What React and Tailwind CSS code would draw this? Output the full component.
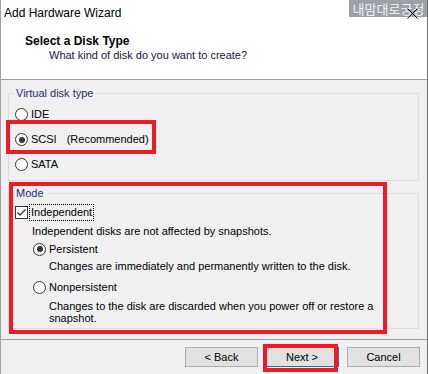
import React from "react";

// Add Hardware Wizard – "Select a Disk Type" page (with red annotation boxes)

function Radio({ checked }) {
  return (
    <span className="flex h-[13px] w-[13px] shrink-0 items-center justify-center rounded-full border border-[#333333] bg-white">
      {checked ? <span className="h-[6px] w-[6px] rounded-full bg-[#333333]" /> : null}
    </span>
  );
}

function Checkbox({ checked }) {
  return (
    <span className="flex h-[13px] w-[13px] shrink-0 items-center justify-center border border-[#333333] bg-white">
      {checked ? (
        <svg width="11" height="11" viewBox="0 0 11 11">
          <path d="M1.5 5.5 L4 8 L9.5 2.5" fill="none" stroke="#333333" strokeWidth="1.3" />
        </svg>
      ) : null}
    </span>
  );
}

const DISK_TYPES = [
  { id: "ide", label: "IDE" },
  { id: "scsi", label: "SCSI", note: "(Recommended)" },
  { id: "sata", label: "SATA" },
];

export default function App() {
  const diskType = "scsi";

  return (
    <div className="relative h-[374px] w-[428px] overflow-hidden border-l border-r border-l-[#a0a0a0] border-r-[#6d6d6d] bg-[#f0f0f0] font-['Liberation_Sans',Arial,sans-serif] text-[11px] text-black">
      {/* Header */}
      <div className="h-[80px] border-b border-[#a0a0a0] bg-white">
        <div className="flex h-[26px] items-center pl-[3px] text-[12px]">Add Hardware Wizard</div>
        <div className="mt-[8px] pl-[24px] text-[12px] font-bold leading-[14px]">Select a Disk Type</div>
        <div className="pl-[48px] text-[11px] leading-[14px] text-[#101838]">
          What kind of disk do you want to create?
        </div>
      </div>

      {/* Body */}
      <div className="pl-[7px] pr-[8px]">
        <fieldset className="mt-[6px] border border-[#dcdcdc] pb-[3px] pl-[6px] pt-[2px]">
          <legend className="ml-[-1px] px-[2px] leading-[14px] text-[#1f2d6b]">Virtual disk type</legend>
          {DISK_TYPES.map((d) => (
            <div key={d.id} className="flex h-[25px] items-center">
              <Radio checked={d.id === diskType} />
              <span className="ml-[3px]">{d.label}</span>
              {d.note ? <span className="ml-[10px]">{d.note}</span> : null}
            </div>
          ))}
        </fieldset>

        <fieldset className="mt-[5px] border border-[#dcdcdc] pb-[4px] pl-[6px]">
          <legend className="ml-[-1px] px-[2px] leading-[14px] text-[#1f2d6b]">Mode</legend>
          <div className="mt-[3px] flex h-[18px] items-center">
            <Checkbox checked />
            <span className="ml-[2px] px-[1px] leading-[15px] outline outline-1 outline-dotted outline-black">
              Independent
            </span>
          </div>
          <div className="mt-[2px] h-[16px] pl-[17px] leading-[16px]">
            Independent disks are not affected by snapshots.
          </div>
          <div className="mt-[1px] flex h-[18px] items-center pl-[18px]">
            <Radio checked />
            <span className="ml-[3px]">Persistent</span>
          </div>
          <div className="h-[16px] pl-[34px] leading-[16px]">
            Changes are immediately and permanently written to the disk.
          </div>
          <div className="mt-[4px] flex h-[18px] items-center pl-[18px]">
            <Radio />
            <span className="ml-[3px]">Nonpersistent</span>
          </div>
          <div className="mt-[4px] pl-[34px] leading-[12px]">
            Changes to the disk are discarded when you power off or restore a
            <br />
            snapshot.
          </div>
        </fieldset>
      </div>

      {/* Footer */}
      <div className="mt-[10px] border-t border-[#a0a0a0] pt-[7px]">
        <div className="flex justify-end pr-[7px]">
          <button className="mr-[7px] h-[20px] w-[73px] border border-[#adadad] bg-[#e1e1e1] text-[11px]">
            &lt; Back
          </button>
          <button className="mr-[8px] h-[20px] w-[74px] border border-[#0078d7] bg-[#e1e1e1] text-[11px]">
            Next &gt;
          </button>
          <button className="h-[20px] w-[73px] border border-[#adadad] bg-[#e1e1e1] text-[11px]">
            Cancel
          </button>
        </div>
      </div>

      {/* watermark + close glyph */}
      <div className="absolute right-[-1px] top-0 flex h-[17px] w-[79px] items-center justify-center bg-[#9ca0a7] font-['Noto_Sans_CJK_KR',sans-serif] text-[13px] leading-[17px] text-[#f2f2f2]">
        내맘대로궁정
      </div>
      <svg className="absolute right-[9px] top-[8px]" width="11" height="11" viewBox="0 0 11 11">
        <path d="M0.5 0.5 L10.5 10.5 M10.5 0.5 L0.5 10.5" stroke="#111111" strokeWidth="1" />
      </svg>

      {/* red annotation boxes */}
      <div className="absolute left-[5px] top-[120px] h-[34px] w-[150px] border-4 border-[#ed1c24]" />
      <div className="absolute left-[8px] top-[182px] h-[152px] w-[378px] border-4 border-[#ed1c24]" />
      <div className="absolute left-[262px] top-[344px] h-[28px] w-[75px] border-4 border-[#ed1c24]" />
    </div>
  );
}
